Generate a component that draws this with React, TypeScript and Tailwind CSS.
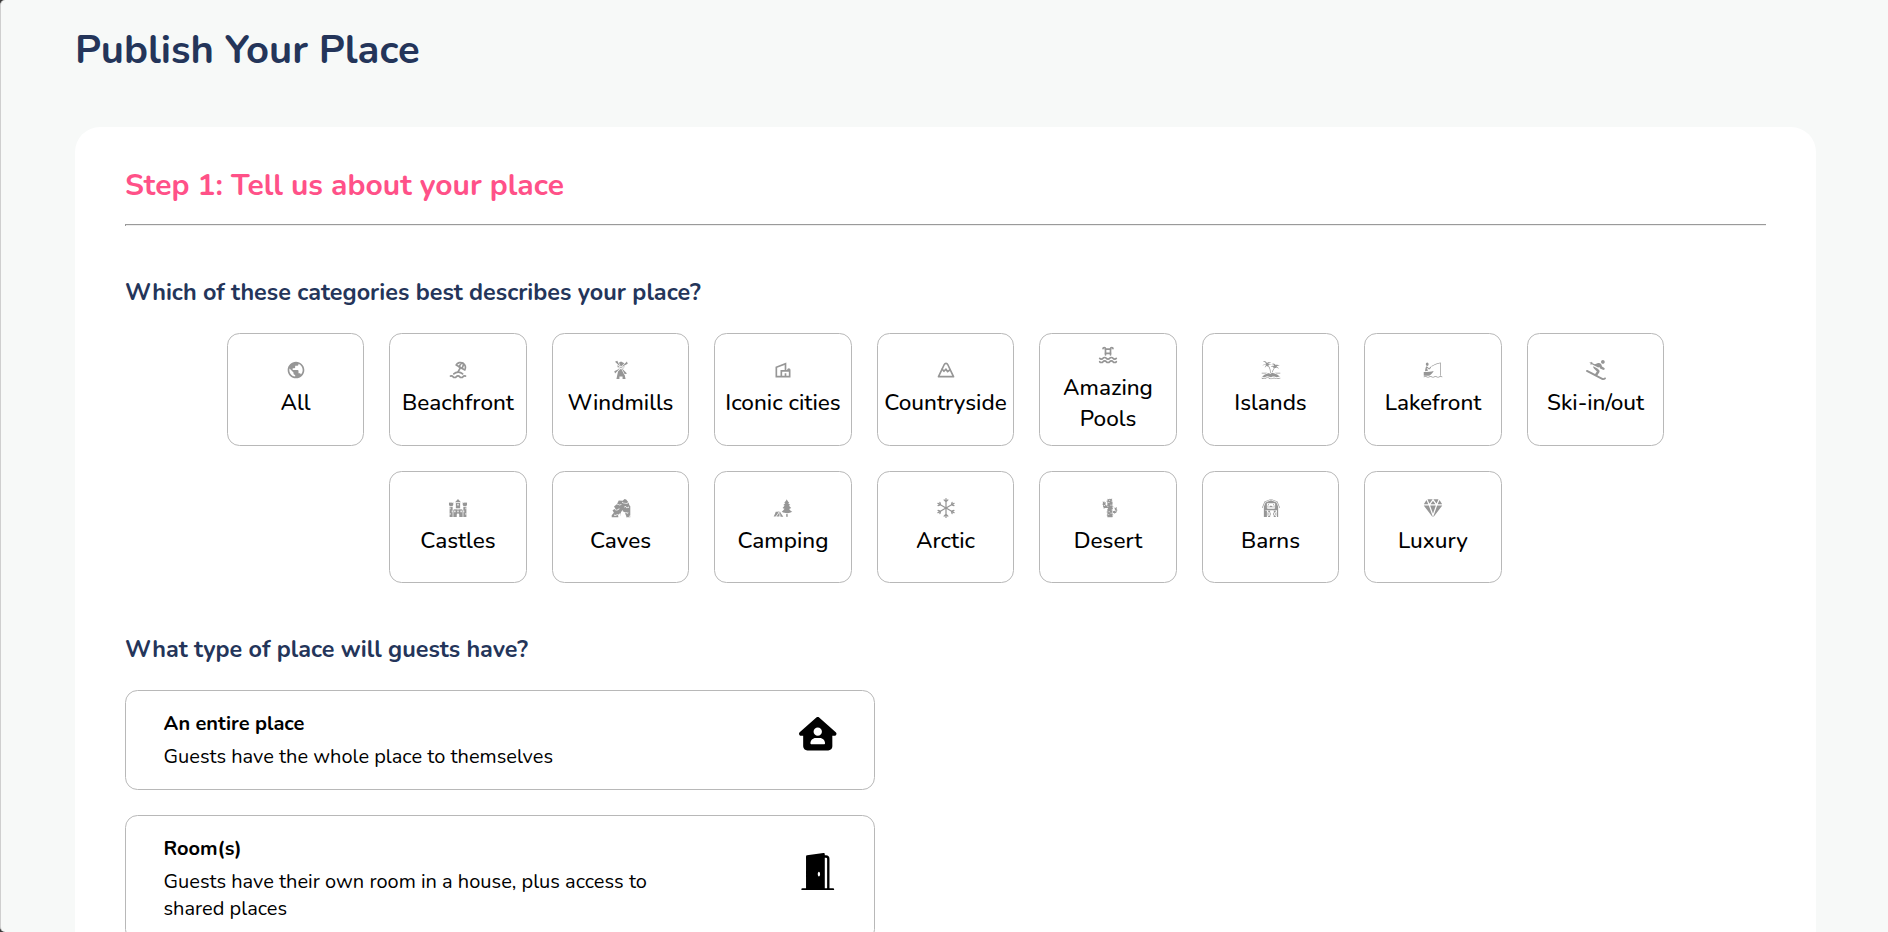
import type { IconType } from "react-icons";
import { MdPublic, MdOutlineVilla } from "react-icons/md";
import { TbBeach, TbMountain, TbPool } from "react-icons/tb";
import {
  GiWindmill,
  GiIsland,
  GiBoatFishing,
  GiCastle,
  GiCaveEntrance,
  GiForestCamp,
  GiCactus,
  GiBarn,
} from "react-icons/gi";
import { FaSkiing } from "react-icons/fa";
import { FaHouseUser } from "react-icons/fa6";
import { BsSnow, BsFillDoorOpenFill } from "react-icons/bs";
import { IoDiamond } from "react-icons/io5";

interface Category {
  label: string;
  icon: IconType;
}

interface PlaceType {
  name: string;
  description: string;
  icon: IconType;
}

const categories: Category[] = [
  { label: "All", icon: MdPublic },
  { label: "Beachfront", icon: TbBeach },
  { label: "Windmills", icon: GiWindmill },
  { label: "Iconic cities", icon: MdOutlineVilla },
  { label: "Countryside", icon: TbMountain },
  { label: "Amazing Pools", icon: TbPool },
  { label: "Islands", icon: GiIsland },
  { label: "Lakefront", icon: GiBoatFishing },
  { label: "Ski-in/out", icon: FaSkiing },
  { label: "Castles", icon: GiCastle },
  { label: "Caves", icon: GiCaveEntrance },
  { label: "Camping", icon: GiForestCamp },
  { label: "Arctic", icon: BsSnow },
  { label: "Desert", icon: GiCactus },
  { label: "Barns", icon: GiBarn },
  { label: "Luxury", icon: IoDiamond },
];

const placeTypes: PlaceType[] = [
  {
    name: "An entire place",
    description: "Guests have the whole place to themselves",
    icon: FaHouseUser,
  },
  {
    name: "Room(s)",
    description: "Guests have their own room in a house, plus access to shared places",
    icon: BsFillDoorOpenFill,
  },
];

function CategoryCard({ label, icon: Icon }: Category) {
  return (
    <button
      type="button"
      className="flex h-[112.5px] w-[137.5px] flex-col items-center justify-center rounded-[12.5px] border border-[#b8b8b8] bg-white"
    >
      <Icon className="size-5 shrink-0 text-[#969696]" />
      <span className="mt-[7px] text-center text-[22.5px] leading-[31px] font-medium text-black">
        {label}
      </span>
    </button>
  );
}

function PlaceTypeCard({ name, description, icon: Icon }: PlaceType) {
  return (
    <div className="flex min-h-[100px] w-[750px] items-center justify-between rounded-[12.5px] border border-[#b8b8b8] px-[37.5px] py-[18.75px] text-[20px] leading-[27px] text-black">
      <div className="max-w-[500px]">
        <p className="mb-[6.25px] font-bold">{name}</p>
        <p>{description}</p>
      </div>
      <Icon className="mb-[13px] size-[37.5px] shrink-0" />
    </div>
  );
}

export default function App() {
  return (
    <div className="h-[932px] overflow-hidden bg-[#3a3a3a] font-[Nunito,Lato,sans-serif]">
      <div className="h-full overflow-hidden rounded-l-[5px] border-l border-[#cfcfcf] bg-[#f7f9f8] pt-[23px] pr-[72px] pl-[74px]">
        <h1 className="text-[40px] leading-[54.6px] font-bold text-[#24355a]">Publish Your Place</h1>

        <main className="mt-[49px] h-[1200px] rounded-[25px] bg-white px-[50px] pt-[38.5px]">
          <h2 className="text-[30px] leading-[41px] font-bold text-[#ff5188]">
            Step 1: Tell us about your place
          </h2>
          <div className="mt-[18px] h-[2px] border-t border-l border-t-[#9a9a9a] border-l-[#9a9a9a] bg-[#eeeeee]" />

          <section className="mt-[50px]">
            <h3 className="text-[23.4px] leading-[32px] font-bold text-[#24355a]">
              Which of these categories best describes your place?
            </h3>
            <div className="mt-[25px] flex flex-wrap justify-center gap-[25px] px-[50px]">
              {categories.map((category) => (
                <CategoryCard key={category.label} {...category} />
              ))}
            </div>
          </section>

          <section className="mt-[50px]">
            <h3 className="text-[23.4px] leading-[32px] font-bold text-[#24355a]">
              What type of place will guests have?
            </h3>
            <div className="mt-[24.75px] flex flex-col gap-[25px]">
              {placeTypes.map((place) => (
                <PlaceTypeCard key={place.name} {...place} />
              ))}
            </div>
          </section>
        </main>
      </div>
    </div>
  );
}
